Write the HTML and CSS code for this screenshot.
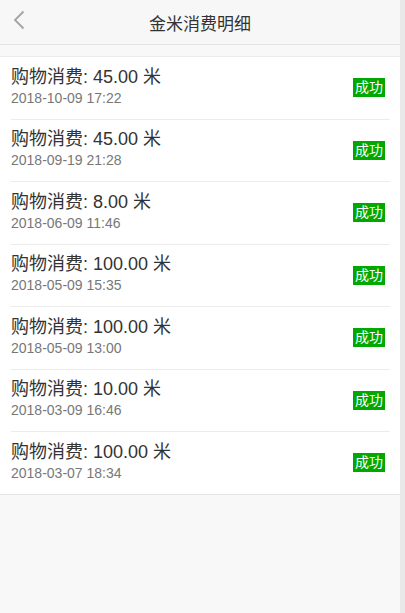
FILE: index.html
```html
<!DOCTYPE html>
<html lang="zh-CN">
<head>
    <meta charset="UTF-8">
    <title>金米消费明细</title>
    <link rel="stylesheet" href="styles.css">
</head>
<body>
    <div class="page">
        <div class="header">
            <a class="back" href="#">
                <svg width="14" height="20" viewBox="0 0 14 20">
                    <polyline points="11.5,1.5 3,10 11.5,18.5" fill="none" stroke="#a3a3a3" stroke-width="1.8"/>
                </svg>
            </a>
            <h1>金米消费明细</h1>
        </div>

        <ul class="list">
            <li class="item">
                <div class="info">
                    <div class="title">购物消费: 45.00 米</div>
                    <div class="date">2018-10-09 17:22</div>
                </div>
                <span class="status">成功</span>
            </li>
            <li class="item">
                <div class="info">
                    <div class="title">购物消费: 45.00 米</div>
                    <div class="date">2018-09-19 21:28</div>
                </div>
                <span class="status">成功</span>
            </li>
            <li class="item">
                <div class="info">
                    <div class="title">购物消费: 8.00 米</div>
                    <div class="date">2018-06-09 11:46</div>
                </div>
                <span class="status">成功</span>
            </li>
            <li class="item">
                <div class="info">
                    <div class="title">购物消费: 100.00 米</div>
                    <div class="date">2018-05-09 15:35</div>
                </div>
                <span class="status">成功</span>
            </li>
            <li class="item">
                <div class="info">
                    <div class="title">购物消费: 100.00 米</div>
                    <div class="date">2018-05-09 13:00</div>
                </div>
                <span class="status">成功</span>
            </li>
            <li class="item">
                <div class="info">
                    <div class="title">购物消费: 10.00 米</div>
                    <div class="date">2018-03-09 16:46</div>
                </div>
                <span class="status">成功</span>
            </li>
            <li class="item">
                <div class="info">
                    <div class="title">购物消费: 100.00 米</div>
                    <div class="date">2018-03-07 18:34</div>
                </div>
                <span class="status">成功</span>
            </li>
        </ul>
    </div>
</body>
</html>
```

FILE: styles.css
```css
html, body {
    margin: 0;
    padding: 0;
    height: 100%;
}

body {
    font-family: "Liberation Sans", "Noto Sans CJK SC", sans-serif;
    background-color: #e9e9e9;
}

.page {
    width: 400px;
    min-height: 100%;
    background-color: #f8f8f8;
}

.header {
    display: flex;
    align-items: center;
    justify-content: center;
    height: 44px;
    border-bottom: 1px solid #e3e3e3;
    background-color: #f7f7f7;
    position: relative;
}

.back {
    position: absolute;
    left: 12px;
    top: 10px;
    display: block;
    width: 14px;
    height: 20px;
}

.header h1 {
    margin: 0;
    font-size: 17px;
    font-weight: normal;
    color: #333;
}

.list {
    list-style: none;
    margin: 11px 0 0;
    padding: 0 0 0 11px;
    background-color: #fff;
    border-top: 1px solid #ececec;
    border-bottom: 1px solid #e6e6e6;
}

.item {
    display: flex;
    align-items: center;
    justify-content: space-between;
    height: 61.5px;
    margin-right: 10px;
    padding-right: 5px;
    border-bottom: 1px solid #ececec;
}

.item:last-child {
    border-bottom: none;
}

.info {
    margin-top: -4px;
}

.title {
    font-size: 18px;
    line-height: 24px;
    color: #333;
}

.date {
    font-size: 14px;
    line-height: 18px;
    color: #777;
}

.status {
    display: inline-block;
    padding: 0 2px;
    height: 19px;
    line-height: 19px;
    font-size: 14px;
    color: #fff;
    background-color: #00a800;
}
```
